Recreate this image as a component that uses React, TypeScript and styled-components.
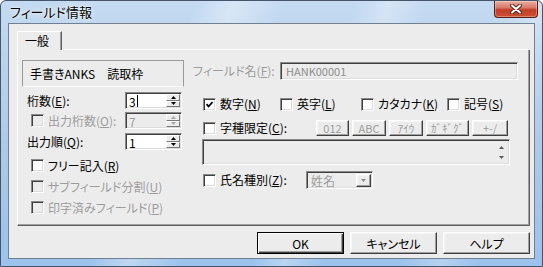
import React from "react";
import styled, { createGlobalStyle, css } from "styled-components";

const GlobalStyle = createGlobalStyle`
  html, body {
    margin: 0;
    padding: 0;
    background: #ffffff;
  }
  body {
    font-family: "Noto Sans CJK JP", "Noto Sans", sans-serif;
    font-size: 12px;
    font-feature-settings: "palt";
  }
`;

// classic 3D edges
const raised = css`
  border: 1px solid;
  border-color: #ffffff #404040 #404040 #ffffff;
  box-shadow: inset -1px -1px 0 #a0a0a0, inset 1px 1px 0 #f6f6f6;
`;
const sunken = css`
  border: 1px solid;
  border-color: #8a8a8a #ffffff #ffffff #8a8a8a;
  box-shadow: inset 1px 1px 0 #3f3f3f, inset -1px -1px 0 #dcdcdc;
`;

const Window = styled.div`
  width: 543px;
  height: 267px;
  box-sizing: border-box;
  display: flex;
  flex-direction: column;
  border: 1px solid #46566a;
  border-radius: 6px 6px 0 0;
  overflow: hidden;
  background:
    linear-gradient(112deg, transparent 0 30%, rgba(255, 255, 255, 0.35) 36%, transparent 44%,
      transparent 55%, rgba(255, 255, 255, 0.3) 60%, transparent 66%, transparent 78%,
      rgba(255, 255, 255, 0.25) 84%, transparent 90%),
    linear-gradient(180deg, #c4daf1 0%, #b6cfea 35%, #a9c6e7 70%, #9cc2ec 100%);
`;

const TitleBar = styled.div`
  height: 22px;
  flex: none;
  display: flex;
  align-items: flex-start;
  justify-content: space-between;
`;

const Title = styled.div`
  font-size: 13px;
  line-height: 22px;
  padding-left: 9px;
  color: #000;
  text-shadow: 0 0 6px rgba(255, 255, 255, 0.95), 0 0 2px #ffffff;
`;

const CloseButton = styled.div`
  width: 44px;
  height: 17px;
  margin-right: 4px;
  box-sizing: border-box;
  display: flex;
  align-items: center;
  justify-content: center;
  border: 1px solid #5a1e16;
  border-top: none;
  border-radius: 0 0 4px 4px;
  background: linear-gradient(180deg, #eab0a3 0%, #d9786a 42%, #c23d27 55%, #cc5034 100%);
  box-shadow: inset 0 0 0 1px rgba(255, 255, 255, 0.3);
`;

const Client = styled.div`
  flex: 1;
  margin: 0 7px 7px 7px;
  box-sizing: border-box;
  border: 1px solid #6f8093;
  background: #ececec;
  padding: 7px 4px 0 8px;
  display: flex;
  flex-direction: column;
`;

const TabStrip = styled.div`
  display: flex;
  height: 19px;
`;

const Tab = styled.div`
  width: 45px;
  box-sizing: border-box;
  border-top: 1px solid #ffffff;
  border-left: 1px solid #ffffff;
  border-right: 1px solid #5e5e5e;
  box-shadow: inset -1px 0 0 #a0a0a0;
  padding-left: 7px;
  line-height: 17px;
  color: #000;
`;

const TabFiller = styled.div`
  flex: 1;
  border-bottom: 1px solid #ffffff;
`;

const Panel = styled.div`
  height: 176px;
  box-sizing: border-box;
  border-left: 1px solid #ffffff;
  border-right: 1px solid #5e5e5e;
  border-bottom: 1px solid #5e5e5e;
  box-shadow: inset -1px -1px 0 #a0a0a0;
  padding: 10px 0 0 4px;
  display: flex;
  gap: 9px;
`;

const LeftCol = styled.div`
  width: 162px;
  display: flex;
  flex-direction: column;
`;

const RightCol = styled.div`
  width: 326px;
  display: flex;
  flex-direction: column;
`;

const AnksBox = styled.div`
  height: 27px;
  box-sizing: border-box;
  border: 1px solid #9a9a9a;
  border-bottom-color: #fbfbfb;
  padding-left: 7px;
  display: flex;
  align-items: center;
  color: #000;
`;

const Row = styled.div<{ $top: number; $h: number }>`
  display: flex;
  align-items: center;
  margin-top: ${(p) => p.$top}px;
  height: ${(p) => p.$h}px;
`;

const FieldLabel = styled.div<{ $w: number; $indent?: number }>`
  width: ${(p) => p.$w}px;
  box-sizing: border-box;
  padding-left: ${(p) => p.$indent ?? 0}px;
  display: flex;
  align-items: center;
  gap: 4px;
  flex: none;
`;

const Text = styled.span<{ $disabled?: boolean }>`
  color: ${(p) => (p.$disabled ? "#9c9c9c" : "#000000")};
  white-space: nowrap;
  line-height: 14px;
`;

const Key = styled.u`
  text-underline-offset: 1px;
`;

const Box = styled.span<{ $disabled?: boolean }>`
  width: 13px;
  height: 13px;
  box-sizing: border-box;
  flex: none;
  display: inline-flex;
  align-items: center;
  justify-content: center;
  background: ${(p) => (p.$disabled ? "#ececec" : "#ffffff")};
  ${sunken}
`;

const CheckItem = styled.div<{ $w?: number; $indent?: number }>`
  display: flex;
  align-items: center;
  gap: 4px;
  flex: none;
  width: ${(p) => (p.$w ? `${p.$w}px` : "auto")};
  margin-left: ${(p) => p.$indent ?? 0}px;
`;

const SpinBox = styled.div<{ $disabled?: boolean }>`
  width: 57px;
  height: 17px;
  box-sizing: border-box;
  display: flex;
  background: ${(p) => (p.$disabled ? "#ececec" : "#ffffff")};
  ${sunken}
`;

const SpinValue = styled.span<{ $disabled?: boolean }>`
  flex: 1;
  display: flex;
  align-items: center;
  padding: 1px 0 0 3px;
  color: ${(p) => (p.$disabled ? "#9c9c9c" : "#000000")};
  line-height: 13px;
`;

const Caret = styled.span`
  width: 1px;
  height: 12px;
  background: #000;
  margin-left: 1px;
`;

const SpinButtons = styled.div`
  width: 15px;
  display: flex;
  flex-direction: column;
  padding: 1px 1px 1px 0;
  box-sizing: border-box;
`;

const SpinButton = styled.div`
  flex: 1;
  display: flex;
  align-items: center;
  justify-content: center;
  background: #ececec;
  border: 1px solid;
  border-color: #ffffff #7a7a7a #7a7a7a #ffffff;
`;

const TextField = styled.div`
  width: 238px;
  height: 18px;
  box-sizing: border-box;
  ${sunken}
  background: #ececec;
  color: #8c8c8c;
  font-size: 11px;
  line-height: 16px;
  padding-left: 5px;
`;

const CharButtons = styled.div`
  display: flex;
  gap: 3px;
`;

const CharButton = styled.div<{ $w: number }>`
  width: ${(p) => p.$w}px;
  height: 16px;
  box-sizing: border-box;
  ${raised}
  background: #ececec;
  color: #9c9c9c;
  font-size: 11px;
  line-height: 14px;
  text-align: center;
`;

const TextArea = styled.div`
  margin-top: 3px;
  margin-left: 9px;
  width: 308px;
  height: 26px;
  box-sizing: border-box;
  ${sunken}
  background: #ececec;
  display: flex;
  justify-content: flex-end;
`;

const ScrollArrows = styled.div`
  width: 16px;
  display: flex;
  flex-direction: column;
  justify-content: space-around;
  align-items: center;
  padding: 2px 0;
`;

const Select = styled.div`
  width: 67px;
  height: 18px;
  box-sizing: border-box;
  ${sunken}
  background: #ececec;
  display: flex;
  align-items: stretch;
  padding: 2px 1px 1px 2px;
`;

const SelectValue = styled.span`
  flex: 1;
  color: #9c9c9c;
  padding-left: 2px;
  line-height: 13px;
`;

const SelectButton = styled.div`
  width: 15px;
  box-sizing: border-box;
  ${raised}
  background: #ececec;
  display: flex;
  align-items: center;
  justify-content: center;
`;

const ButtonBar = styled.div`
  display: flex;
  justify-content: flex-end;
  gap: 6px;
  margin-top: 6px;
`;

const DialogButton = styled.div<{ $default?: boolean }>`
  width: 87px;
  height: 22px;
  box-sizing: border-box;
  background: #ececec;
  display: flex;
  align-items: center;
  justify-content: center;
  color: #000;
  ${(p) =>
    p.$default
      ? css`
          border: 1px solid #000;
          box-shadow: inset 1px 1px 0 #ffffff, inset -1px -1px 0 #404040, inset -2px -2px 0 #a0a0a0;
        `
      : raised}
`;

function CheckBox({ checked, disabled }: { checked?: boolean; disabled?: boolean }) {
  return (
    <Box $disabled={disabled}>
      {checked && (
        <svg width="9" height="9" viewBox="0 0 9 9">
          <path d="M1.5 4.2 L3.6 6.4 L7.6 2" stroke="#000" strokeWidth="1.7" fill="none" />
        </svg>
      )}
    </Box>
  );
}

function Arrow({ up, color = "#000" }: { up?: boolean; color?: string }) {
  return (
    <svg width="5" height="3" viewBox="0 0 5 3">
      <path d={up ? "M0 3 L2.5 0 L5 3 Z" : "M0 0 L5 0 L2.5 3 Z"} fill={color} />
    </svg>
  );
}

function Spin({ value, disabled, caret }: { value: string; disabled?: boolean; caret?: boolean }) {
  const c = disabled ? "#a8a8a8" : "#000";
  return (
    <SpinBox $disabled={disabled}>
      <SpinValue $disabled={disabled}>
        {value}
        {caret && <Caret />}
      </SpinValue>
      <SpinButtons>
        <SpinButton>
          <Arrow up color={c} />
        </SpinButton>
        <SpinButton>
          <Arrow color={c} />
        </SpinButton>
      </SpinButtons>
    </SpinBox>
  );
}

function Label({ text, k, tail = "", disabled }: { text: string; k: string; tail?: string; disabled?: boolean }) {
  return (
    <Text $disabled={disabled}>
      {text}(<Key>{k}</Key>){tail}
    </Text>
  );
}

const charKinds = [
  { label: "012", w: 33 },
  { label: "ABC", w: 34 },
  { label: "ｱｲｳ", w: 34 },
  { label: "ｶﾞｷﾞｸﾞ", w: 43 },
  { label: "+-/", w: 36 },
];

export default function App() {
  return (
    <>
      <GlobalStyle />
      <Window>
        <TitleBar>
          <Title>フィールド情報</Title>
          <CloseButton>
            <svg width="12" height="10" viewBox="0 0 12 10">
              <path d="M2 1.5 L10 8.5 M10 1.5 L2 8.5" stroke="#5b1b12" strokeWidth="4" strokeLinecap="round" />
              <path d="M2 1.5 L10 8.5 M10 1.5 L2 8.5" stroke="#ffffff" strokeWidth="2.2" strokeLinecap="round" />
            </svg>
          </CloseButton>
        </TitleBar>
        <Client>
          <TabStrip>
            <Tab>一般</Tab>
            <TabFiller />
          </TabStrip>
          <Panel>
            <LeftCol>
              <AnksBox>手書きANKS　読取枠</AnksBox>
              <Row $top={5} $h={17}>
                <FieldLabel $w={103} $indent={5}>
                  <Label text="桁数" k="E" tail=":" />
                </FieldLabel>
                <Spin value="3" caret />
              </Row>
              <Row $top={3} $h={17}>
                <FieldLabel $w={103} $indent={9}>
                  <CheckBox disabled />
                  <Label text="出力桁数" k="O" tail=":" disabled />
                </FieldLabel>
                <Spin value="7" disabled />
              </Row>
              <Row $top={4} $h={17}>
                <FieldLabel $w={103} $indent={5}>
                  <Label text="出力順" k="Q" tail=":" />
                </FieldLabel>
                <Spin value="1" />
              </Row>
              <Row $top={5} $h={21}>
                <CheckItem $indent={9}>
                  <CheckBox />
                  <Label text="フリー記入" k="R" />
                </CheckItem>
              </Row>
              <Row $top={0} $h={21}>
                <CheckItem $indent={9}>
                  <CheckBox disabled />
                  <Label text="サブフィールド分割" k="U" disabled />
                </CheckItem>
              </Row>
              <Row $top={0} $h={21}>
                <CheckItem $indent={9}>
                  <CheckBox disabled />
                  <Label text="印字済みフィールド" k="P" disabled />
                </CheckItem>
              </Row>
            </LeftCol>
            <RightCol>
              <Row $top={2} $h={18}>
                <FieldLabel $w={87}>
                  <Label text="フィールド名" k="F" tail=":" disabled />
                </FieldLabel>
                <TextField>HANK00001</TextField>
              </Row>
              <Row $top={15} $h={18}>
                <CheckItem $w={77} $indent={10}>
                  <CheckBox checked />
                  <Label text="数字" k="N" />
                </CheckItem>
                <CheckItem $w={81}>
                  <CheckBox />
                  <Label text="英字" k="L" />
                </CheckItem>
                <CheckItem $w={86}>
                  <CheckBox />
                  <Label text="カタカナ" k="K" />
                </CheckItem>
                <CheckItem>
                  <CheckBox />
                  <Label text="記号" k="S" />
                </CheckItem>
              </Row>
              <Row $top={7} $h={16}>
                <CheckItem $w={113} $indent={10}>
                  <CheckBox />
                  <Label text="字種限定" k="C" tail=":" />
                </CheckItem>
                <CharButtons>
                  {charKinds.map((c) => (
                    <CharButton key={c.label} $w={c.w}>
                      {c.label}
                    </CharButton>
                  ))}
                </CharButtons>
              </Row>
              <TextArea>
                <ScrollArrows>
                  <Arrow up color="#5a5a5a" />
                  <Arrow color="#5a5a5a" />
                </ScrollArrows>
              </TextArea>
              <Row $top={6} $h={18}>
                <CheckItem $w={103} $indent={10}>
                  <CheckBox />
                  <Label text="氏名種別" k="Z" tail=":" />
                </CheckItem>
                <Select>
                  <SelectValue>姓名</SelectValue>
                  <SelectButton>
                    <Arrow color="#8a8a8a" />
                  </SelectButton>
                </Select>
              </Row>
            </RightCol>
          </Panel>
          <ButtonBar>
            <DialogButton $default>OK</DialogButton>
            <DialogButton>キャンセル</DialogButton>
            <DialogButton>ヘルプ</DialogButton>
          </ButtonBar>
        </Client>
      </Window>
    </>
  );
}
